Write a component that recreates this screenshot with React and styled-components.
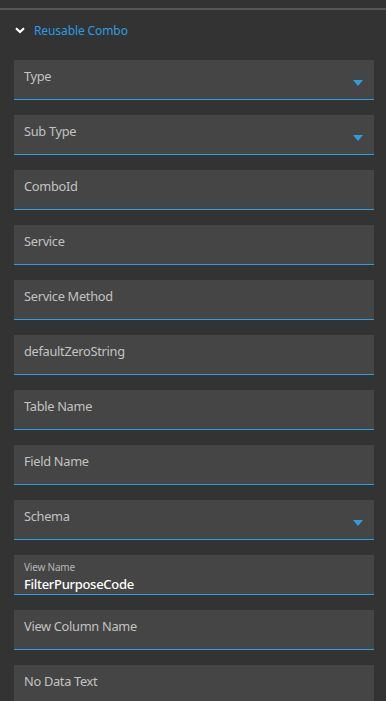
import React from "react";
import styled, { createGlobalStyle } from "styled-components";

const Global = createGlobalStyle`
  html, body { margin: 0; padding: 0; background: #333333; }
  body { font-family: "Noto Sans", "Open Sans", sans-serif; }
`;

const Page = styled.div`
  width: 386px;
  min-height: 701px;
  background: #333333;
  padding-top: 8px;
  box-sizing: border-box;
`;

const Divider = styled.div`
  height: 2px;
  background: #575757;
`;

const Header = styled.div`
  display: flex;
  align-items: center;
  gap: 9px;
  height: 40px;
  padding-left: 15px;
`;

const HeaderTitle = styled.span`
  color: #2a9de3;
  font-size: 12px;
  letter-spacing: -0.1px;
`;

const Fields = styled.div`
  display: flex;
  flex-direction: column;
  gap: 15px;
  padding: 10px 12px 0 14px;
`;

const Field = styled.div`
  position: relative;
  height: 40px;
  background: #454545;
  border-bottom: 1px solid #2a9de3;
  display: flex;
  flex-direction: column;
  justify-content: flex-start;
  padding: ${(p) => (p.$filled ? "6px 10px 0" : "8px 10px 0")};
  box-sizing: border-box;
`;

const Label = styled.span`
  color: #c2c2c2;
  font-size: 12.8px;
  line-height: 16px;
  letter-spacing: -0.3px;
`;

const SmallLabel = styled.span`
  color: #b5b5b5;
  font-size: 10px;
  line-height: 13px;
  letter-spacing: -0.2px;
`;

const Value = styled.span`
  color: #ffffff;
  font-size: 13px;
  font-weight: 500;
  line-height: 17px;
  margin-top: 2px;
  letter-spacing: -0.3px;
`;

const Arrow = styled.svg`
  position: absolute;
  right: 11px;
  top: 20px;
`;

const fields = [
  { label: "Type", select: true },
  { label: "Sub Type", select: true },
  { label: "ComboId" },
  { label: "Service" },
  { label: "Service Method" },
  { label: "defaultZeroString" },
  { label: "Table Name" },
  { label: "Field Name" },
  { label: "Schema", select: true },
  { label: "View Name", value: "FilterPurposeCode" },
  { label: "View Column Name" },
  { label: "No Data Text" },
];

export default function App() {
  return (
    <Page>
      <Global />
      <Divider />
      <Header>
        <svg width="10" height="7" viewBox="0 0 10 7">
          <path d="M1 1.2 L5 5 L9 1.2" stroke="#ffffff" strokeWidth="2.2" fill="none" />
        </svg>
        <HeaderTitle>Reusable Combo</HeaderTitle>
      </Header>
      <Fields>
        {fields.map((f) => (
          <Field key={f.label} $filled={!!f.value}>
            {f.value ? (
              <>
                <SmallLabel>{f.label}</SmallLabel>
                <Value>{f.value}</Value>
              </>
            ) : (
              <Label>{f.label}</Label>
            )}
            {f.select && (
              <Arrow width="10" height="6" viewBox="0 0 10 6">
                <path d="M0 0 H10 L5 6 Z" fill="#2a9de3" />
              </Arrow>
            )}
          </Field>
        ))}
      </Fields>
    </Page>
  );
}
